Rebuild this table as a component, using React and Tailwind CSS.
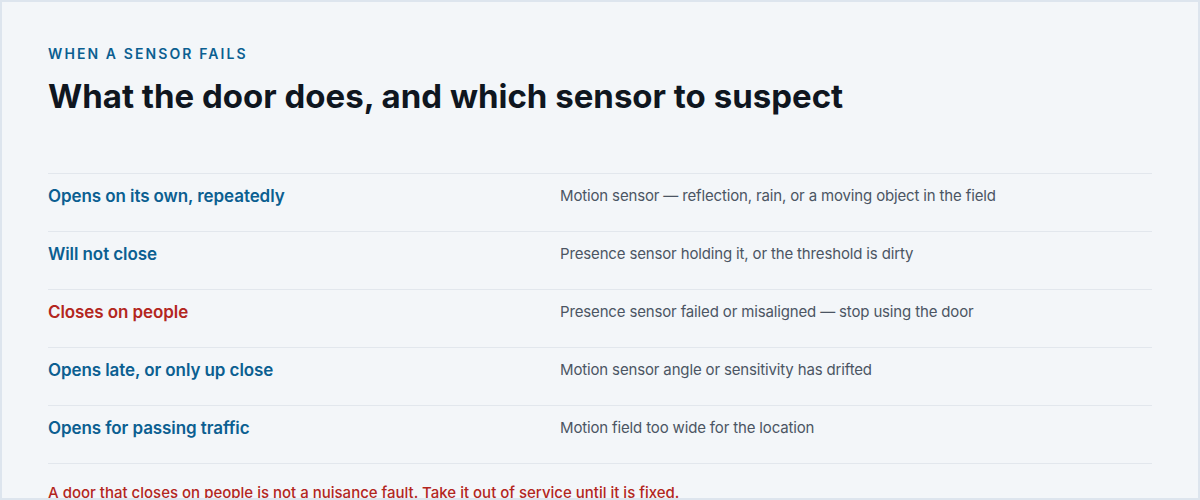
const rows = [
  { symptom: 'Opens on its own, repeatedly', cause: 'Motion sensor — reflection, rain, or a moving object in the field' },
  { symptom: 'Will not close', cause: 'Presence sensor holding it, or the threshold is dirty' },
  { symptom: 'Closes on people', cause: 'Presence sensor failed or misaligned — stop using the door', danger: true },
  { symptom: 'Opens late, or only up close', cause: 'Motion sensor angle or sensitivity has drifted' },
  { symptom: 'Opens for passing traffic', cause: 'Motion field too wide for the location' },
];

export default function App() {
  return (
    <div
      className="h-[500px] overflow-hidden border-2 border-[#dde5ee] bg-[#f3f6f9] px-[46px] pt-[42px]"
      style={{ fontFamily: 'Inter, "Noto Sans", sans-serif' }}
    >
      <p className="text-[14px] leading-5 font-semibold tracking-[0.15em] text-[#0b5f91]">
        WHEN A SENSOR FAILS
      </p>
      <h1 className="mt-3 text-[33px] leading-10 font-bold tracking-normal text-[#0f161f]">
        What the door does, and which sensor to suspect
      </h1>

      <div className="mt-[57px] border-b border-[#e2e7ed]">
        {rows.map((row) => (
          <div
            key={row.symptom}
            className="grid grid-cols-[512px_1fr] border-t border-[#e2e7ed] pt-[10px] pb-[23px]"
          >
            <div
              className={
                'text-[17px] leading-6 font-semibold tracking-[-0.005em] ' +
                (row.danger ? 'text-[#b3261e]' : 'text-[#0b5f91]')
              }
            >
              {row.symptom}
            </div>
            <div className="text-[15px] leading-6 tracking-[-0.01em] text-[#4b5563]">{row.cause}</div>
          </div>
        ))}
      </div>

      <p className="mt-[18px] text-[15px] leading-[22px] font-medium text-[#b3261e]">
        A door that closes on people is not a nuisance fault. Take it out of service until it is fixed.
      </p>
    </div>
  );
}
